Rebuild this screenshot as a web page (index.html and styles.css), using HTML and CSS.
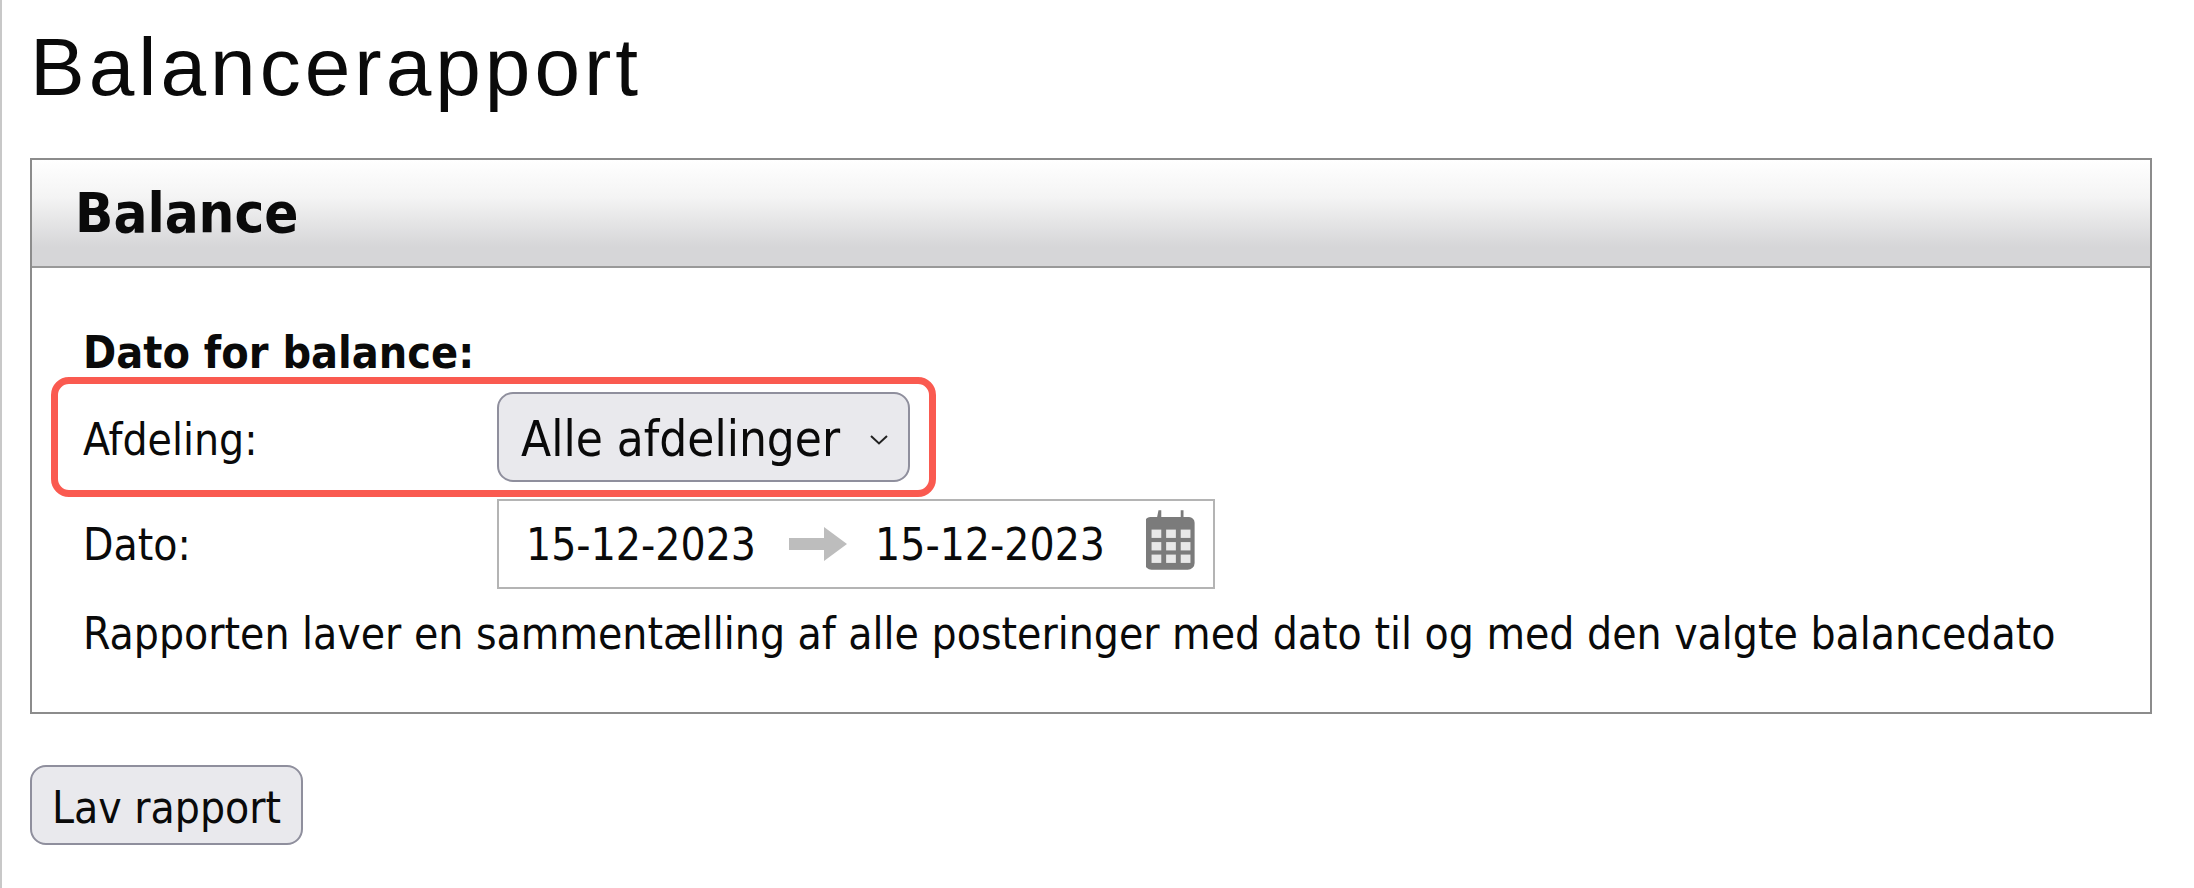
FILE: index.html
```html
<!DOCTYPE html>
<html lang="da">
<head>
    <meta charset="UTF-8">
    <title>Balancerapport</title>
    <link rel="stylesheet" href="styles.css">
</head>
<body>
    <h1 class="page-title">Balancerapport</h1>
    <section class="panel">
        <h2 class="panel-title">Balance</h2>
        <div class="panel-body">
            <div class="panel-heading">Dato for balance:</div>
            <div class="form-row row-select">
                <span class="row-label">Afdeling:</span>
                <div class="select-box">
                    <span>Alle afdelinger</span>
                    <svg class="chevron" width="20" height="13" viewBox="0 0 20 13"><path d="M2 3 L10 10.5 L18 3" fill="none" stroke="#222" stroke-width="2"/></svg>
                </div>
                <div class="highlight"></div>
            </div>
            <div class="form-row row-date">
                <span class="row-label">Dato:</span>
                <div class="date-box">
                    <span>15-12-2023</span>
                    <svg class="arrow" width="60" height="36" viewBox="0 0 60 36"><path d="M1 12 H36 V1 L59 18 L36 35 V24 H1 Z" fill="#bdbdbd"/></svg>
                    <span>15-12-2023</span>
                    <svg class="calendar" width="50" height="60" viewBox="0 0 36 43">
                        <path d="M9 0 h2 v5 h14 v-5 h2 v5 h4 a4 4 0 0 1 4 4 v29 a5 5 0 0 1 -5 5 h-26 a5 5 0 0 1 -5 -5 v-29 a4 4 0 0 1 4 -4 h5 Z" fill="#7b7b7b"/>
                        <g fill="#e8e8e8">
                            <rect x="4" y="14" width="7" height="6"/><rect x="14.5" y="14" width="7" height="6"/><rect x="25" y="14" width="7" height="6"/>
                            <rect x="4" y="23" width="7" height="6"/><rect x="14.5" y="23" width="7" height="6"/><rect x="25" y="23" width="7" height="6"/>
                            <rect x="4" y="32" width="7" height="6"/><rect x="14.5" y="32" width="7" height="6"/><rect x="25" y="32" width="7" height="6"/>
                        </g>
                    </svg>
                </div>
            </div>
            <p class="panel-note">Rapporten laver en sammentælling af alle posteringer med dato til og med den valgte balancedato</p>
        </div>
    </section>
    <button class="report-btn">Lav rapport</button>
</body>
</html>
```

FILE: styles.css
```css
html {
    background-color: #fff;
}
body {
    font-family: "DejaVu Sans Condensed", "DejaVu Sans", sans-serif;
    font-size: 44px;
    color: #0a0a0a;
    margin: 0;
    padding: 0 42px 0 28px;
    min-height: 888px;
    box-sizing: border-box;
    border-left: 2px solid #c8c8c8;
}
.page-title {
    font-family: "Liberation Sans", Arial, sans-serif;
    font-weight: normal;
    font-size: 82px;
    line-height: 88px;
    letter-spacing: 4px;
    margin: 0;
    padding: 23px 0 47px;
}
.panel {
    border: 2px solid #8c8c8c;
}
.panel-title {
    font-size: 56px;
    line-height: 106px;
    height: 108px;
    box-sizing: border-box;
    margin: 0;
    padding-left: 43px;
    border-bottom: 2px solid #999;
    background: linear-gradient(to bottom, #fff 0%, #f4f4f4 35%, #d6d6d8 82%, #d6d6d8 100%);
    font-weight: bold;
}
.panel-body {
    padding: 62px 0 55px 51px;
}
.panel-heading {
    font-size: 44.5px;
    font-weight: bold;
    line-height: 46px;
}
.form-row {
    display: grid;
    grid-template-columns: 414px auto;
    justify-content: start;
    align-items: center;
    position: relative;
}
.row-select {
    height: 90px;
    margin-top: 16px;
}
.row-select .row-label {
    padding-top: 5px;
}
.row-date {
    margin-top: 17px;
}
.select-box {
    display: flex;
    align-items: center;
    justify-content: space-between;
    width: 413px;
    height: 90px;
    box-sizing: border-box;
    padding: 5px 19px 0 22px;
    font-size: 49px;
    background-color: #e9e9ed;
    border: 2px solid #8f8f9d;
    border-radius: 16px;
}
.highlight {
    position: absolute;
    left: -32px;
    top: -15px;
    width: 885px;
    height: 120px;
    box-sizing: border-box;
    border: 7px solid #fa5a50;
    border-radius: 18px;
}
.date-box {
    display: flex;
    align-items: center;
    width: 718px;
    height: 90px;
    box-sizing: border-box;
    padding: 0 17px 0 27px;
    border: 2px solid #b4b4b4;
}
.arrow {
    margin: 0 27px 0 32px;
}
.calendar {
    margin: 0 0 8px auto;
}
.panel-note {
    margin: 22px 0 0;
    line-height: 46px;
}
.report-btn {
    display: block;
    margin-top: 51px;
    width: 273px;
    height: 80px;
    padding: 5px 0 0;
    font-family: inherit;
    font-size: 44px;
    color: #0a0a0a;
    background-color: #e9e9ed;
    border: 2px solid #8f8f9d;
    border-radius: 16px;
}
```
